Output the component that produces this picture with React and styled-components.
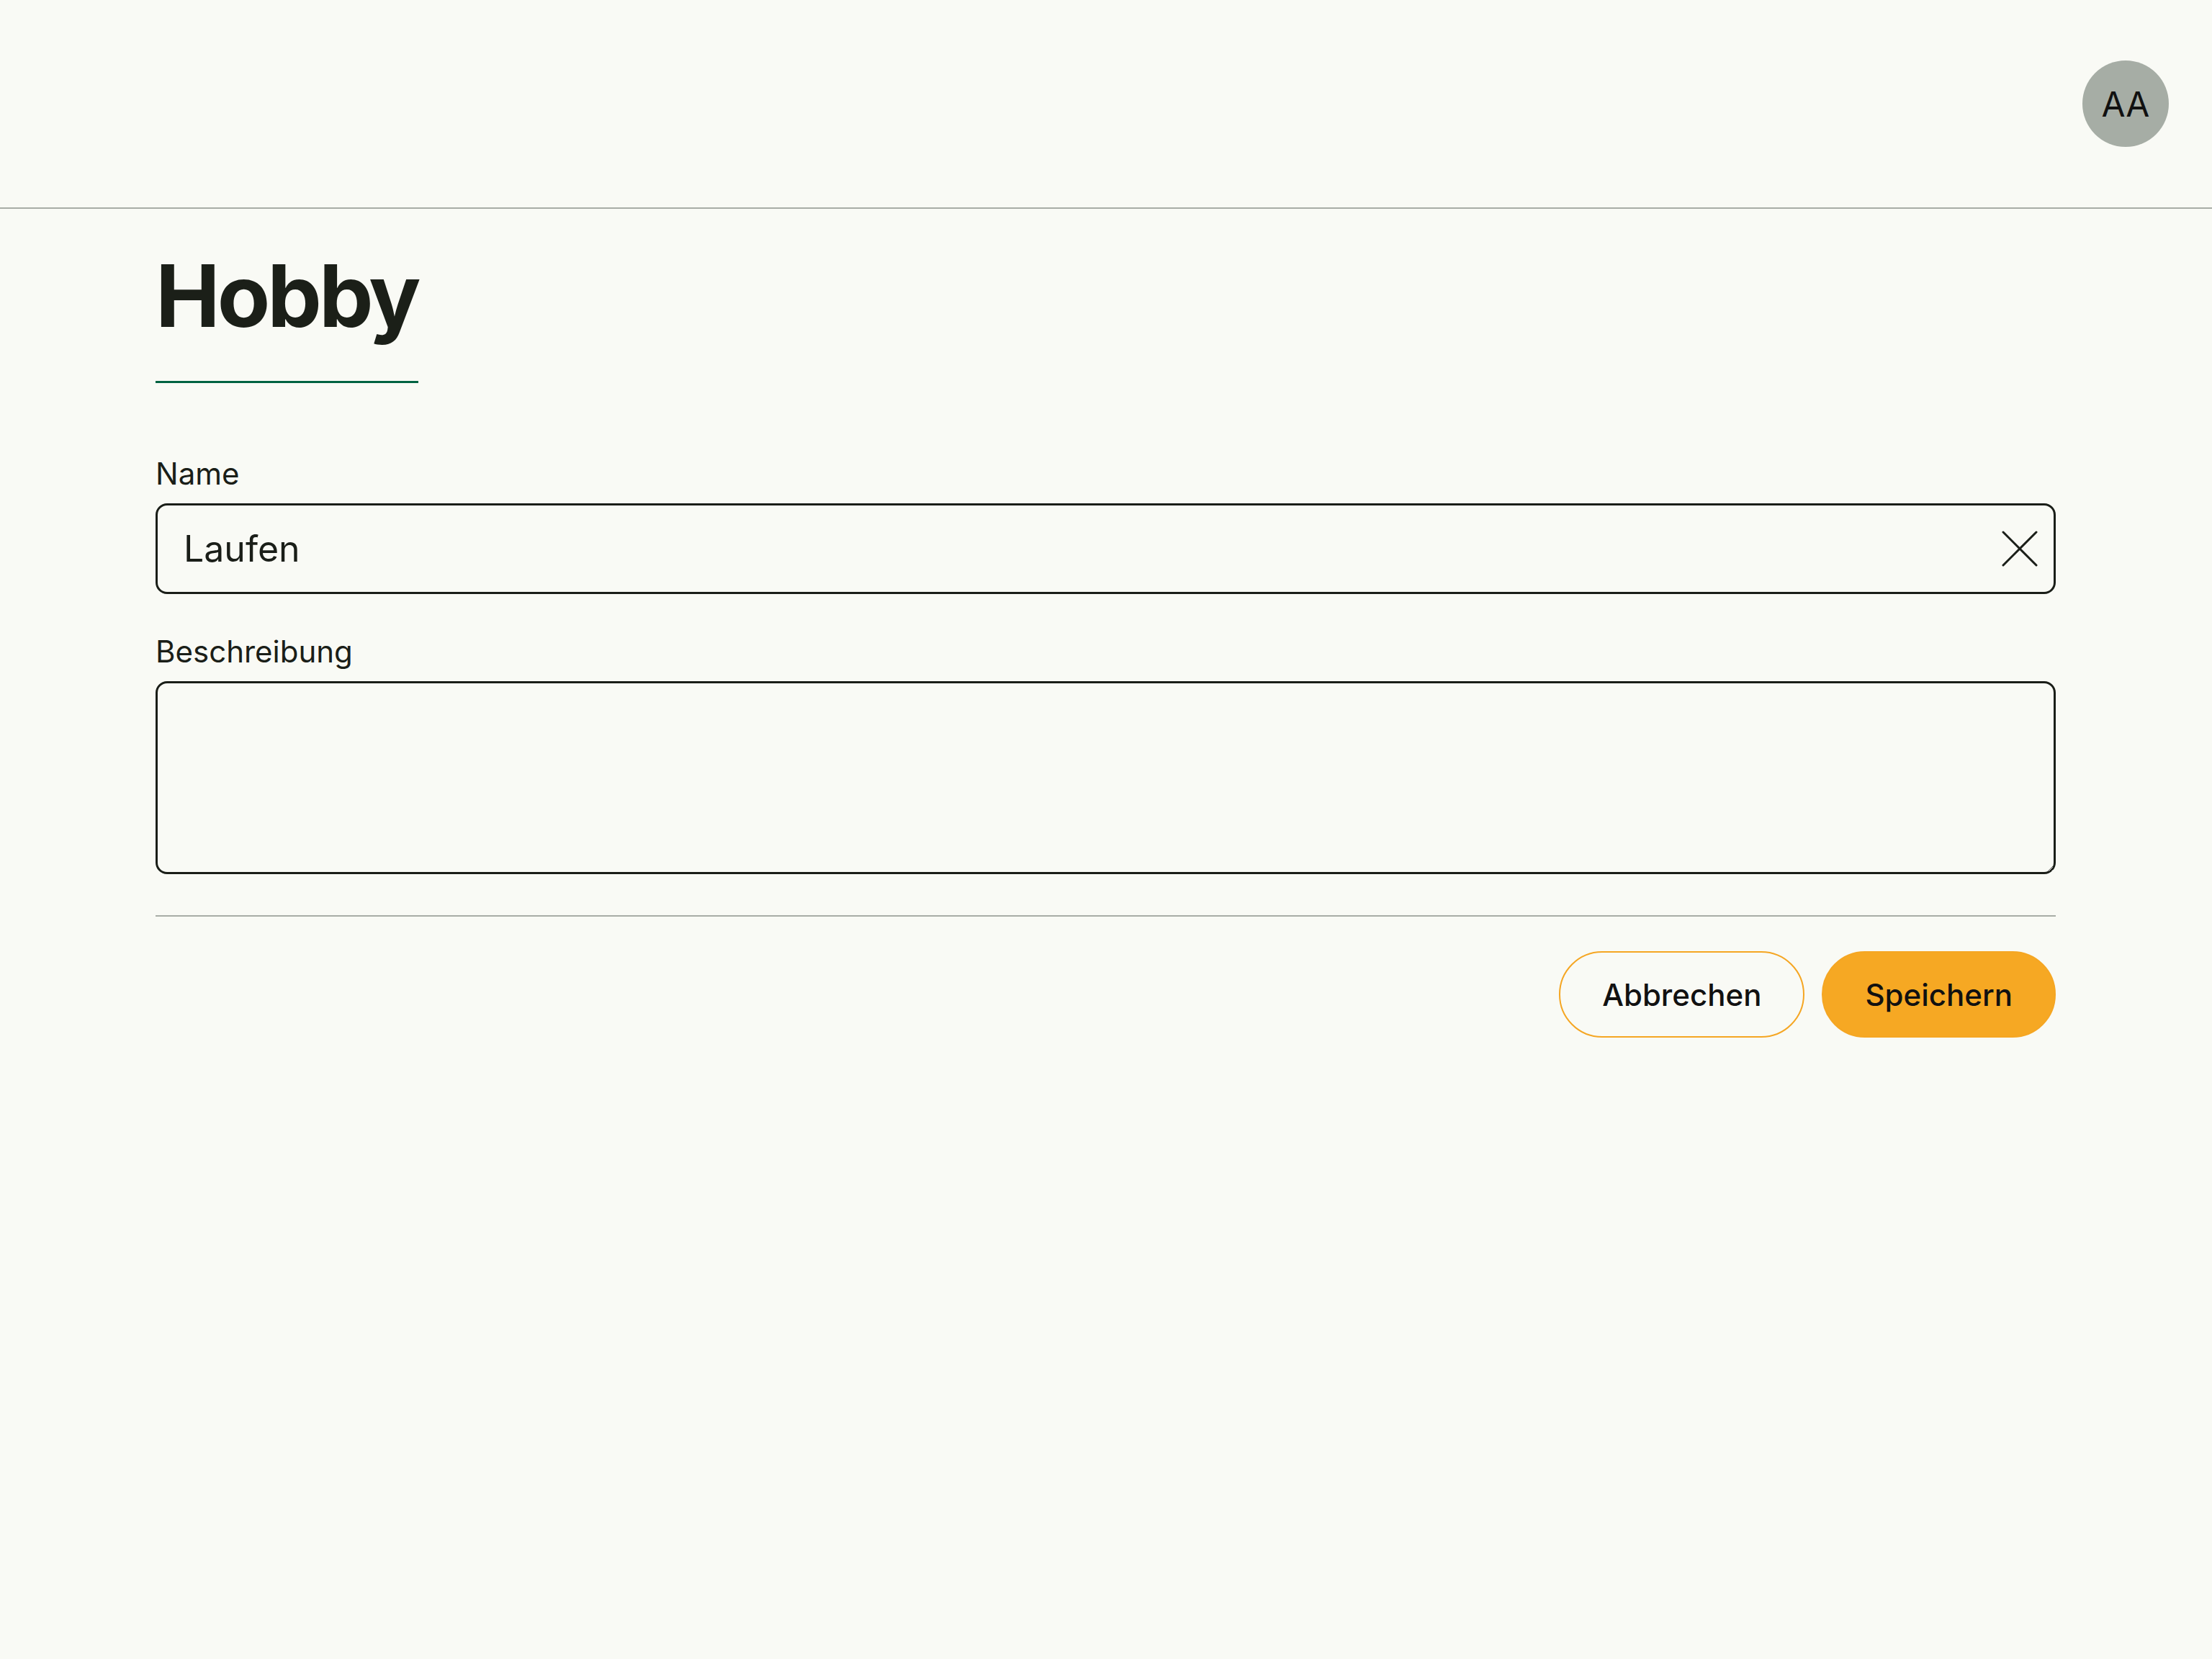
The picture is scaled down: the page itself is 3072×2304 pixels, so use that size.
import styled, { createGlobalStyle } from "styled-components";

const GlobalStyle = createGlobalStyle`
	* {
		box-sizing: border-box;
	}
	body {
		margin: 0;
		background: #f9faf5;
		font-family: Inter, "Noto Sans", sans-serif;
		color: #1a1e18;
	}
`;

const ClearIcon = () => (
	<svg width="50" height="50" viewBox="0 0 50 50" fill="none">
		<path
			d="M2 2L48 48M48 2L2 48"
			stroke="#1a1e18"
			strokeWidth="3"
			strokeLinecap="round"
		/>
	</svg>
);

const App = () => {
	return (
		<>
			<GlobalStyle />
			<Header>
				<Avatar>AA</Avatar>
			</Header>

			<Main>
				<Title>Hobby</Title>

				<Form>
					<Field>
						<Label htmlFor="name">Name</Label>
						<InputBox>
							<Input id="name" defaultValue="Laufen" />
							<ClearButton type="button" aria-label="Leeren">
								<ClearIcon />
							</ClearButton>
						</InputBox>
					</Field>

					<Field>
						<Label htmlFor="beschreibung">Beschreibung</Label>
						<TextArea id="beschreibung" />
					</Field>
				</Form>

				<Divider />

				<Actions>
					<Button $variant="outline">Abbrechen</Button>
					<Button $variant="primary">Speichern</Button>
				</Actions>
			</Main>
		</>
	);
};

export default App;

const Header = styled.header`
	height: 290px;
	display: flex;
	align-items: center;
	justify-content: flex-end;
	padding-right: 60px;
	border-bottom: 2px solid #a8ada6;
`;

const Avatar = styled.div`
	width: 120px;
	height: 120px;
	border-radius: 50%;
	background: #a6ada5;
	display: flex;
	align-items: center;
	justify-content: center;
	font-size: 48px;
	color: #111;
`;

const Main = styled.main`
	padding: 48px 217px 0 216px;
`;

const Title = styled.h1`
	display: inline-block;
	margin: 0;
	font-size: 120px;
	font-weight: 700;
	letter-spacing: -4px;
	color: #1b1f18;
	padding-bottom: 46px;
	border-bottom: 3px solid #006241;
`;

const Form = styled.div`
	margin-top: 100px;
	display: flex;
	flex-direction: column;
	gap: 54px;
`;

const Field = styled.div`
	display: flex;
	flex-direction: column;
	gap: 16px;
`;

const Label = styled.label`
	font-size: 42px;
	font-weight: 400;
	color: #1a1e18;
`;

const InputBox = styled.div`
	display: flex;
	align-items: center;
	height: 126px;
	border: 3px solid #1a1e18;
	border-radius: 16px;
	padding: 0 22px 0 36px;
`;

const Input = styled.input`
	flex: 1;
	border: none;
	outline: none;
	background: transparent;
	font-family: inherit;
	font-size: 50px;
	color: #1a1e18;
	padding: 0;
`;

const ClearButton = styled.button`
	border: none;
	background: transparent;
	padding: 0;
	display: flex;
	cursor: pointer;
`;

const TextArea = styled.textarea`
	height: 268px;
	border: 3px solid #1a1e18;
	border-radius: 16px;
	background: transparent;
	font-family: inherit;
	font-size: 50px;
	padding: 20px 36px;
	outline: none;
	resize: vertical;
`;

const Divider = styled.hr`
	margin: 57px 0 0;
	border: none;
	border-top: 2px solid #a8ada6;
`;

const Actions = styled.div`
	display: flex;
	justify-content: flex-end;
	gap: 24px;
	margin-top: 48px;
`;

const Button = styled.button`
	height: 120px;
	padding: 0 58px;
	border-radius: 60px;
	border: 2px solid #f5a623;
	background: ${({ $variant }) =>
		$variant === "primary" ? "#f6a823" : "transparent"};
	font-family: inherit;
	font-size: 42px;
	font-weight: 500;
	color: #111;
	cursor: pointer;
`;
